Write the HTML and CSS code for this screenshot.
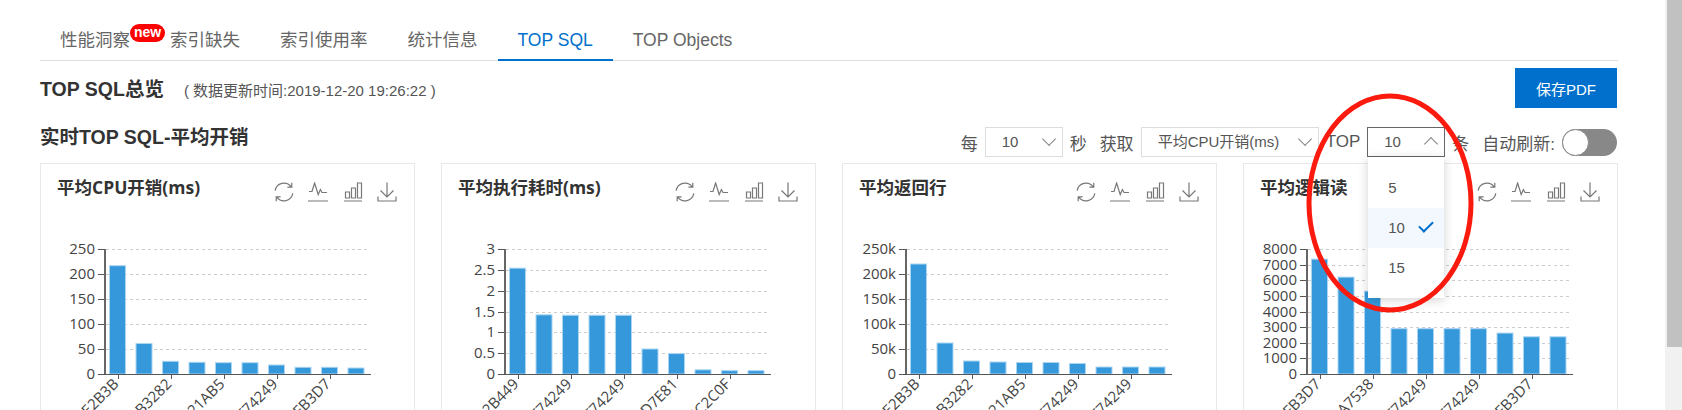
FILE: index.html
```html
<!DOCTYPE html>
<html lang="zh-CN">
<head>
  <meta charset="UTF-8" />
  <title>TOP SQL</title>
  <link rel="stylesheet" href="styles.css">
</head>
<body>
  <svg class="icon-defs" width="0" height="0">
    <symbol id="ic-refresh" viewBox="0 0 20 20">
      <path d="M1.2 8.600A8.900 8.900 0 0 1 17 4.600M17.800 .8v4.400h-4.400M18.800 11.400A8.900 8.900 0 0 1 3 15.400M2.200 19.200v-4.400h4.400" />
    </symbol>
    <symbol id="ic-line" viewBox="0 0 20 20">
      <path d="M1 9.500h3L6.600 1l3.600 11.500 2.200-5 1.600 3H19M0 19h20" />
    </symbol>
    <symbol id="ic-bar" viewBox="0 0 20 20">
      <path d="M1 19h18M2.500 10h4v6h-4zM8.500 6h4v10h-4zM14.500 1h4v15h-4z" />
    </symbol>
    <symbol id="ic-save" viewBox="0 0 20 20">
      <path d="M10 .5V15M3.500 8.500l6.500 6.500 6.500-6.500M1 14.500V19h18v-4.500" />
    </symbol>
  </svg>

  <div class="page">
    <div class="main">
      <div class="tabs">
        <a class="tab tab-new">性能洞察<span class="badge">new</span></a>
        <a class="tab">索引缺失</a>
        <a class="tab">索引使用率</a>
        <a class="tab">统计信息</a>
        <a class="tab active">TOP SQL</a>
        <a class="tab">TOP Objects</a>
      </div>

      <div class="overview">
        <h2>TOP SQL总览</h2>
        <span class="updated">( 数据更新时间:2019-12-20 19:26:22 )</span>
        <button class="btn-pdf">保存PDF</button>
      </div>

      <div class="toolbar">
        <h3>实时TOP SQL-平均开销</h3>
        <div class="controls">
          <span>每</span>
          <div class="select select-sm">10<i class="chev"></i></div>
          <span class="after">秒</span>
          <span>获取</span>
          <div class="select select-lg">平均CPU开销(ms)<i class="chev"></i></div>
          <span>TOP</span>
          <div class="select select-sm open">10<i class="chev up"></i>
            <ul class="menu">
              <li>5</li>
              <li class="selected">10<i class="check"></i></li>
              <li>15</li>
            </ul>
          </div>
          <span class="after">条</span>
          <span>自动刷新:</span>
          <div class="switch"><i class="knob"></i></div>
        </div>
      </div>

      <div class="cards">
        <div class="card">
          <div class="card-head">
            <h4>平均CPU开销(ms)</h4>
            <div class="tools">
              <svg><use href="#ic-refresh" /></svg><svg><use href="#ic-line" /></svg><svg><use href="#ic-bar" /></svg><svg><use href="#ic-save" /></svg>
            </div>
          </div>
          <div class="chart" data-chart="cpu"></div>
        </div>
        <div class="card">
          <div class="card-head">
            <h4>平均执行耗时(ms)</h4>
            <div class="tools">
              <svg><use href="#ic-refresh" /></svg><svg><use href="#ic-line" /></svg><svg><use href="#ic-bar" /></svg><svg><use href="#ic-save" /></svg>
            </div>
          </div>
          <div class="chart" data-chart="time"></div>
        </div>
        <div class="card">
          <div class="card-head">
            <h4>平均返回行</h4>
            <div class="tools">
              <svg><use href="#ic-refresh" /></svg><svg><use href="#ic-line" /></svg><svg><use href="#ic-bar" /></svg><svg><use href="#ic-save" /></svg>
            </div>
          </div>
          <div class="chart" data-chart="rows"></div>
        </div>
        <div class="card">
          <div class="card-head">
            <h4>平均逻辑读</h4>
            <div class="tools">
              <svg><use href="#ic-refresh" /></svg><svg><use href="#ic-line" /></svg><svg><use href="#ic-bar" /></svg><svg><use href="#ic-save" /></svg>
            </div>
          </div>
          <div class="chart" data-chart="reads"></div>
        </div>
      </div>
    </div>

    <div class="scrollbar"><div class="thumb"></div></div>

    <!-- red hand-drawn marker around the TOP select -->
    <svg class="marker" width="170" height="224" viewBox="0 0 170 224">
      <ellipse cx="85" cy="112" rx="81" ry="107" />
    </svg>
  </div>

  <script src="charts.js"></script>
</body>
</html>
```

FILE: styles.css
```css
html, body {
  margin: 0;
  height: 410px;
  overflow: hidden;
  background: #fff;
}

body {
  font-family: "Liberation Sans", "Noto Sans CJK SC", sans-serif;
  color: #333;
}

.icon-defs {
  position: absolute;
}

.page {
  position: relative;
  display: flex;
  height: 410px;
  overflow: hidden;
}

.main {
  flex: 1;
  min-width: 0;
  padding: 0 47px 0 40px;
}

/* tabs */
.tabs {
  display: flex;
  height: 60px;
  align-items: stretch;
  border-bottom: 1px solid #ddd;
}

.tab {
  position: relative;
  padding: 29px 20px 0;
  font-size: 17.5px;
  line-height: 23px;
  color: #666;
  box-sizing: border-box;
}

.tab.active {
  color: #0070cc;
  height: 61px;
  border-bottom: 2px solid #0070cc;
}

.badge {
  position: absolute;
  left: 90px;
  top: 24px;
  width: 35px;
  height: 18px;
  border-radius: 9px;
  background: #f00;
  color: #fff;
  font-size: 14px;
  font-weight: bold;
  line-height: 17px;
  text-align: center;
}

/* overview row */
.overview {
  display: flex;
  align-items: center;
  height: 40px;
  margin-top: 7px;
}

.overview h2 {
  margin: 0;
  padding-top: 1px;
  font-size: 19.5px;
  line-height: 40px;
  color: #333;
}

.updated {
  margin-left: 20px;
  font-size: 15px;
  color: #555;
  padding-top: 2px;
}

.btn-pdf {
  margin-left: auto;
  margin-right: 1px;
  width: 102px;
  height: 40px;
  border: none;
  background: #0070cc;
  color: #fff;
  font-family: inherit;
  font-size: 15px;
}

/* toolbar */
.toolbar {
  display: flex;
  align-items: center;
  justify-content: space-between;
  height: 30px;
  margin-top: 19px;
}

.toolbar h3 {
  align-self: flex-start;
  margin: 0;
  font-size: 19.5px;
  line-height: 20px;
  color: #333;
}

.controls {
  display: flex;
  align-items: center;
  gap: 7px;
  margin-right: 1px;
  font-size: 17px;
  color: #555;
}

.controls .after {
  margin-right: 6px;
}

.select {
  position: relative;
  box-sizing: border-box;
  height: 30px;
  padding-left: 16px;
  border: 1px solid #ddd;
  font-size: 15px;
  line-height: 27px;
  color: #555;
}

.select-sm {
  width: 78px;
}

.select-lg {
  width: 178px;
}

.select.open {
  border-color: #666;
}

.chev {
  position: absolute;
  right: 8px;
  top: 6px;
  width: 9px;
  height: 9px;
  border-right: 1.5px solid #888;
  border-bottom: 1.5px solid #888;
  transform: rotate(45deg);
}

.chev.up {
  top: 11px;
  transform: rotate(225deg);
}

.menu {
  position: absolute;
  z-index: 2;
  left: 0;
  top: 29px;
  width: 76px;
  margin: 0;
  padding: 11px 0 10px;
  list-style: none;
  background: #fff;
  box-shadow: 0 2px 10px rgba(0, 0, 0, 0.18);
}

.menu li {
  position: relative;
  height: 40px;
  padding-left: 20px;
  line-height: 40px;
  font-size: 15px;
  color: #555;
}

.menu li.selected {
  background: #f2f8fd;
}

.check {
  position: absolute;
  left: 51px;
  top: 13px;
  width: 12px;
  height: 6px;
  border-left: 2px solid #0070cc;
  border-bottom: 2px solid #0070cc;
  transform: rotate(-45deg);
}

.switch {
  width: 55px;
  height: 27px;
  border-radius: 14px;
  background: #888;
}

.knob {
  display: block;
  box-sizing: border-box;
  width: 27px;
  height: 27px;
  border: 1px solid #888;
  border-radius: 50%;
  background: #fff;
}

/* chart cards */
.cards {
  display: grid;
  grid-template-columns: repeat(4, 375px);
  gap: 26px;
  margin-top: 6px;
}

.card {
  box-sizing: border-box;
  height: 400px;
  border: 1px solid #e8e8e8;
}

.card-head {
  display: flex;
  justify-content: space-between;
  height: 66px;
  padding: 0 17px 0 16px;
}

.card-head h4 {
  margin: 11px 0 0;
  font-family: "Open Sans", "Noto Sans CJK SC", sans-serif;
  font-size: 17.5px;
  font-weight: 700;
  line-height: 24px;
  color: #333;
}

.tools {
  display: flex;
  gap: 14.5px;
  padding-top: 18px;
}

.tools svg {
  width: 20px;
  height: 20px;
  fill: none;
  stroke: #777;
  stroke-width: 1.2;
}

.chart svg {
  display: block;
  margin-left: -1px;
}

.axis-text {
  font-family: "Open Sans", sans-serif;
  font-size: 15px;
  fill: #444;
}

.cat-text {
  font-family: "Open Sans", sans-serif;
  font-size: 15px;
  fill: #444;
}

.grid-line {
  stroke: #ccc;
  stroke-dasharray: 3 3;
}

.axis-line {
  stroke: #555;
}

.axis-left {
  stroke: #666;
  stroke-width: 2;
}

.bar {
  fill: #3498db;
  stroke: #a9d5f3;
}

/* page scrollbar */
.scrollbar {
  width: 17px;
  background: #f1f1f1;
}

.thumb {
  height: 347px;
  margin-left: 2px;
  background: #c1c1c1;
}

.marker {
  position: absolute;
  z-index: 3;
  left: 1305px;
  top: 91px;
  fill: none;
  stroke: #fb1a0e;
  stroke-width: 5;
  pointer-events: none;
}
```

FILE: charts.js
```js
const charts = {
  cpu: {
    max: 250,
    ticks: ['250', '200', '150', '100', '50', '0'],
    values: [216.6, 61, 25.4, 23.4, 22.6, 22.6, 18, 13.4, 13.4, 12],
    cats: ['06E2B3B', '09B3282', '0421AB5', '0F74249', '0CFB3D7'],
    axisX: 65
  },
  time: {
    max: 3,
    ticks: ['3', '2.5', '2', '1.5', '1', '0.5', '0'],
    values: [2.54, 1.42, 1.41, 1.41, 1.41, 0.6, 0.49, 0.1, 0.08, 0.08],
    cats: ['092B449', '0F74249', '0F74249', '08D7E81', '06C2C0F'],
    axisX: 64
  },
  rows: {
    max: 250,
    ticks: ['250k', '200k', '150k', '100k', '50k', '0'],
    values: [220, 62, 26, 24, 23, 23, 21, 14, 14, 14],
    cats: ['06E2B3B', '09B3282', '0421AB5', '0F74249', '0F74249'],
    axisX: 64
  },
  reads: {
    max: 8000,
    ticks: ['8000', '7000', '6000', '5000', '4000', '3000', '2000', '1000', '0'],
    values: [7350, 6200, 5300, 2900, 2900, 2900, 2900, 2620, 2380, 2380],
    cats: ['0CFB3D7', '03A7538', '0F74249', '0F74249', '0CFB3D7'],
    axisX: 64
  }
};

// y of the plot inside the svg
const TOP = 19;
const BOTTOM = 144;
const STEP = 26.5;

document.querySelectorAll('.chart').forEach((el) => {
  const c = charts[el.dataset.chart];
  const x0 = c.axisX;
  let out = '';

  c.ticks.forEach((t, i) => {
    const y = Math.round(TOP + (BOTTOM - TOP) * i / (c.ticks.length - 1)) + 0.5;
    if (i < c.ticks.length - 1) {
      out += `<line class="grid-line" x1="${x0 + 1}" x2="${x0 + 262}" y1="${y}" y2="${y}" />`;
    }
    out += `<line class="axis-line" x1="${x0 - 7}" x2="${x0}" y1="${y}" y2="${y}" />`;
    out += `<text class="axis-text" x="${x0 - 10}" y="${y + 4}" text-anchor="end">${t}</text>`;
  });

  c.values.forEach((v, i) => {
    const h = (BOTTOM - TOP) * v / c.max;
    const x = x0 + 4.5 + i * STEP;
    out += `<rect class="bar" x="${x}" y="${BOTTOM - h}" width="16" height="${h}" />`;
  });

  c.cats.forEach((name, i) => {
    const x = Math.round(x0 + 13 + i * 2 * STEP) + 0.5;
    out += `<line class="axis-line" x1="${x}" x2="${x}" y1="${BOTTOM}" y2="${BOTTOM + 5}" />`;
    out += `<text class="cat-text" text-anchor="end" transform="translate(${x + 1} ${BOTTOM + 11}) rotate(-45)">${name}</text>`;
  });

  out += `<line class="axis-left" x1="${x0}" x2="${x0}" y1="${TOP}" y2="${BOTTOM + 1}" />`;
  out += `<line class="axis-line" x1="${x0 - 7}" x2="${x0 + 266}" y1="${BOTTOM + 0.5}" y2="${BOTTOM + 0.5}" />`;

  el.innerHTML = `<svg width="375" height="200">${out}</svg>`;
});
```
